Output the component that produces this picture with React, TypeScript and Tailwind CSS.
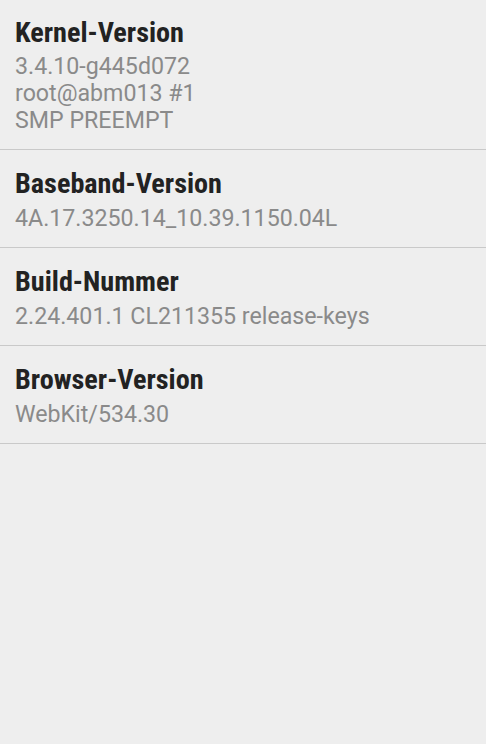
import React from "react";

const items = [
  { title: "Kernel-Version", lines: ["3.4.10-g445d072", "root@abm013 #1", "SMP PREEMPT"] },
  { title: "Baseband-Version", lines: ["4A.17.3250.14_10.39.1150.04L"] },
  { title: "Build-Nummer", lines: ["2.24.401.1 CL211355 release-keys"] },
  { title: "Browser-Version", lines: ["WebKit/534.30"] },
];

export default function App() {
  return (
    <div className="w-[486px] h-[744px] bg-[#eeeeee] overflow-hidden">
      {items.map((it, i) => (
        <div
          key={it.title}
          className={`px-[15px] pb-[15px] border-b border-[#c9c9c9] ${i === 0 ? "pt-[16px]" : "pt-[17px]"}`}
        >
          <div
            className="text-[28.2px] leading-[34px] font-bold text-[#222222]"
            style={{ fontFamily: '"Roboto Condensed", Roboto, sans-serif', fontStretch: "condensed" }}
          >
            {it.title}
          </div>
          <div
            className={`${i === 0 ? "mt-[3px]" : "mt-[4px]"} text-[23.2px] leading-[27px] text-[#8a8a8a]`}
            style={{ fontFamily: "Roboto, sans-serif" }}
          >
            {it.lines.map((l) => (
              <div key={l}>{l}</div>
            ))}
          </div>
        </div>
      ))}
    </div>
  );
}
